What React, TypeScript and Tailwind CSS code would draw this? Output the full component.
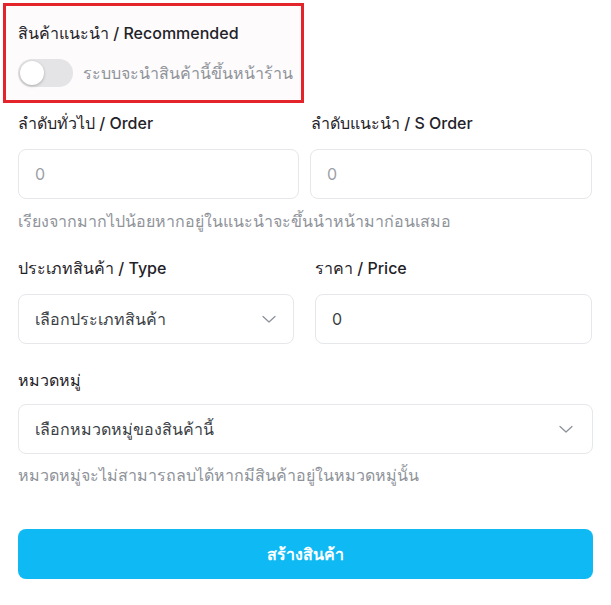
import React from "react";

const Chevron = () => (
  <svg width="16" height="16" viewBox="0 0 16 16" fill="none" className="shrink-0">
    <path d="M2 5.5 L8 11 L14 5.5" stroke="#8a8f98" strokeWidth="1.2" strokeLinecap="round" strokeLinejoin="round" />
  </svg>
);

export default function App() {
  return (
    <div
      className="w-[611px] h-[605px] bg-white px-[18px] text-[16px] text-[#1f2329]"
      style={{ fontFamily: "Inter, 'Noto Sans', 'DejaVu Sans', sans-serif" }}
    >
      <div className="pt-[3px] -ml-[15px]">
        <div className="w-[301px] h-[100px] border-[3px] border-[#e3242b] bg-[#fdfbfc] pl-[12px] pt-[15px]">
          <div className="font-medium leading-[24px]">สินค้าแนะนำ / Recommended</div>
          <div className="mt-[14px] flex items-center gap-[10px]">
            <div className="w-[55px] h-[28px] rounded-full bg-[#e4e4e6] p-[2px] flex items-center">
              <div className="w-[24px] h-[24px] rounded-full bg-white shadow-[0_1px_3px_rgba(0,0,0,0.25)]" />
            </div>
            <span className="text-[#8f939a] leading-[24px]">ระบบจะนำสินค้านี้ขึ้นหน้าร้าน</span>
          </div>
        </div>
      </div>

      <div className="mt-[8px] grid grid-cols-[281px_282px] gap-x-[11px]">
        <div className="font-medium leading-[24px] h-[24px]">ลำดับทั่วไป / Order</div>
        <div className="font-medium leading-[24px] h-[24px] pl-[1px]">ลำดับแนะนำ / S Order</div>
        <div className="mt-[14px] h-[50px] rounded-[8px] border border-[#e6e7ea] px-[16px] flex items-center text-[#9b9fa6]">0</div>
        <div className="mt-[14px] h-[50px] rounded-[8px] border border-[#e6e7ea] px-[16px] flex items-center text-[#9b9fa6]">0</div>
      </div>
      <div className="mt-[10px] leading-[24px] text-[#8f939a]">เรียงจากมากไปน้อยหากอยู่ในแนะนำจะขึ้นนำหน้ามาก่อนเสมอ</div>

      <div className="mt-[23px] grid grid-cols-[276px_277px] gap-x-[21px]">
        <div className="font-medium leading-[24px] h-[24px]">ประเภทสินค้า / Type</div>
        <div className="font-medium leading-[24px] h-[24px]">ราคา / Price</div>
        <div className="mt-[14px] h-[50px] rounded-[8px] border border-[#e6e7ea] pl-[16px] pr-[16px] flex items-center justify-between text-[#3b3f46]">
          <span>เลือกประเภทสินค้า</span>
          <Chevron />
        </div>
        <div className="mt-[14px] h-[50px] rounded-[8px] border border-[#e6e7ea] px-[16px] flex items-center text-[#3b3f46]">0</div>
      </div>

      <div className="mt-[24px] font-medium leading-[24px]">หมวดหมู่</div>
      <div className="mt-[12px] h-[50px] rounded-[8px] border border-[#e6e7ea] pl-[16px] pr-[18px] flex items-center justify-between text-[#3b3f46]">
        <span>เลือกหมวดหมู่ของสินค้านี้</span>
        <Chevron />
      </div>
      <div className="mt-[9px] leading-[24px] text-[#8f939a]">หมวดหมู่จะไม่สามารถลบได้หากมีสินค้าอยู่ในหมวดหมู่นั้น</div>

      <button className="mt-[42px] w-full h-[50px] rounded-[8px] bg-[#0fbaf4] text-white font-semibold">
        สร้างสินค้า
      </button>
    </div>
  );
}
